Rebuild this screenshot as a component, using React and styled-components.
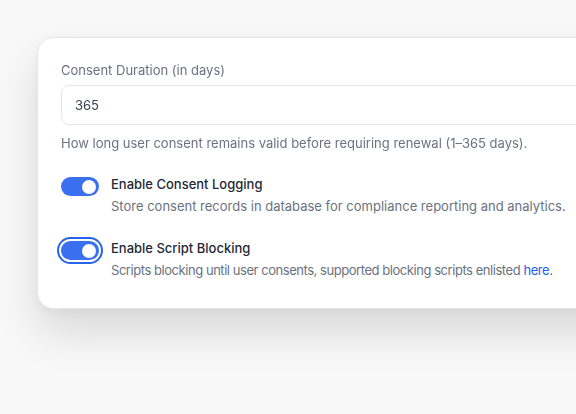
import React from "react";
import styled, { createGlobalStyle } from "styled-components";

const Global = createGlobalStyle`
  html, body {
    margin: 0;
    padding: 0;
    background: #f8f8f9;
    font-family: Inter, "Noto Sans", sans-serif;
    overflow: hidden;
  }
`;

const Page = styled.div`
  width: 576px;
  height: 414px;
  padding: 37px 0 0 37px;
  box-sizing: border-box;
  overflow: hidden;
`;

const Card = styled.div`
  width: 620px;
  background: #ffffff;
  border: 1px solid #e6e6ea;
  border-radius: 16px;
  padding: 24px 23px 30px;
  box-sizing: border-box;
  box-shadow: 0 24px 44px rgba(0, 0, 0, 0.12), 0 4px 10px rgba(0, 0, 0, 0.04);
  display: flex;
  flex-direction: column;
`;

const Blurred = styled.div`
  filter: blur(0.7px);
  display: flex;
  flex-direction: column;
  margin-bottom: 25px;
`;

const Label = styled.div`
  font-size: 13px;
  color: #6b7280;
  margin-bottom: 7px;
`;

const Input = styled.div`
  height: 40px;
  border: 1px solid #e5e7eb;
  border-radius: 8px;
  padding: 0 13px;
  display: flex;
  align-items: center;
  font-size: 13px;
  color: #374151;
  box-sizing: border-box;
`;

const Help = styled.div`
  font-size: 13px;
  color: #6b7280;
  margin-top: 10px;
`;

const Options = styled.div`
  display: flex;
  flex-direction: column;
  gap: 26px;
`;

const Option = styled.div`
  display: flex;
  gap: 12px;
  align-items: flex-start;
`;

const Switch = styled.div`
  flex: none;
  width: 38px;
  height: 19px;
  border-radius: 10px;
  background: #3b6ff2;
  position: relative;
  margin-top: 1px;
  box-shadow: ${(p) => (p.focused ? "0 0 0 2px #fff, 0 0 0 4px #2563eb" : "none")};

  &::after {
    content: "";
    position: absolute;
    right: 3px;
    top: 2.5px;
    width: 14px;
    height: 14px;
    border-radius: 50%;
    background: #fff;
  }
`;

const Text = styled.div`
  display: flex;
  flex-direction: column;
  gap: 6px;
`;

const Title = styled.div`
  font-size: 13px;
  font-weight: 500;
  color: #1f2937;
`;

const Desc = styled.div`
  font-size: 13px;
  color: #6b7280;
  letter-spacing: ${(p) => (p.tight ? "-0.45px" : "0")};
  white-space: nowrap;
`;

const Link = styled.a`
  color: #2563eb;
  text-decoration: none;
`;

export default function App() {
  return (
    <Page>
      <Global />
      <Card>
        <Blurred>
          <Label>Consent Duration (in days)</Label>
          <Input>365</Input>
          <Help>How long user consent remains valid before requiring renewal (1–365 days).</Help>
        </Blurred>
        <Options>
          <Option>
            <Switch />
            <Text>
              <Title>Enable Consent Logging</Title>
              <Desc>Store consent records in database for compliance reporting and analytics.</Desc>
            </Text>
          </Option>
          <Option>
            <Switch focused />
            <Text>
              <Title>Enable Script Blocking</Title>
              <Desc tight>
                Scripts blocking until user consents, supported blocking scripts enlisted <Link href="#">here</Link>.
              </Desc>
            </Text>
          </Option>
        </Options>
      </Card>
    </Page>
  );
}
